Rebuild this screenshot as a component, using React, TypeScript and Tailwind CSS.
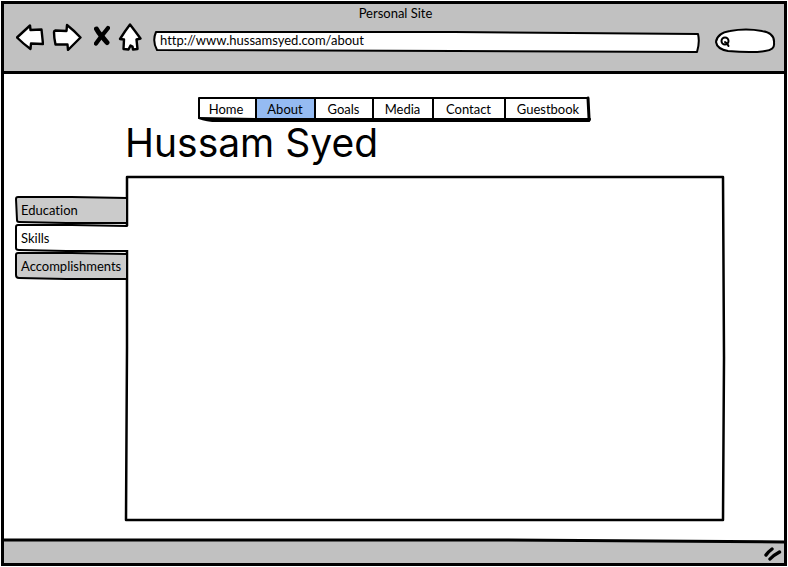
import type { ReactNode } from "react";

type OutlineProps = { box: string; d: string; fill?: string; width?: number };

/* Hand-drawn outline that stretches with the element it decorates. */
function Outline({ box, d, fill = "none", width = 2 }: OutlineProps) {
  return (
    <svg
      aria-hidden="true"
      className="pointer-events-none absolute inset-0 h-full w-full overflow-visible"
      viewBox={box}
      preserveAspectRatio="none"
    >
      <path
        d={d}
        fill={fill}
        stroke="#000"
        strokeWidth={width}
        strokeLinejoin="round"
        strokeLinecap="round"
        vectorEffect="non-scaling-stroke"
      />
    </svg>
  );
}

function ToolButton({ label, children }: { label: string; children: ReactNode }) {
  return (
    <button type="button" aria-label={label} className="block shrink-0">
      {children}
    </button>
  );
}

const links = ["Home", "About", "Goals", "Media", "Contact", "Guestbook"];

const tabs = [
  { name: "Education", d: "M110 1L55 0L2 0Q0 0 0 2L1 23Q1 25 3 25L50 26L110 26" },
  { name: "Skills", d: "M110 1L55 0L2 0Q0 0 0 2L0 23Q0 25 3 25L50 26L110 26" },
  { name: "Accomplishments", d: "M110 1L55 0L2 0Q0 0 0 2L0 22Q0 25 3 25L50 26L110 26" },
];

export default function App() {
  return (
    <div className="flex min-h-screen bg-white p-px font-['Lato',sans-serif] text-[13px] leading-4 text-black [font-variant-ligatures:none]">
      <div className="flex flex-1 flex-col border-3 border-black">
        <header className="border-b-3 border-black bg-[#c1c1c1] pr-[9px] pb-[19px] pl-3">
          <p className="h-[18px] text-center leading-[18px]">Personal Site</p>
          <div className="flex h-[30px]">
            <div className="flex h-[29px] items-center">
              <ToolButton label="Back">
                <svg width="28" height="28" viewBox="0 0 28 28" fill="#fff" stroke="#000" strokeWidth="2.4" strokeLinejoin="round">
                  <path d="M1 14.5L14 2.500L14.500 7Q20 6.500 25.500 6.500L27 21L15 20.500L14.500 26Q7 20.500 1 14.500Z" />
                </svg>
              </ToolButton>
              <div className="ml-2">
                <ToolButton label="Forward">
                  <svg width="30" height="28" viewBox="0 0 30 28" fill="#fff" stroke="#000" strokeWidth="2.4" strokeLinejoin="round">
                    <path d="M2 9Q2 8 3.500 7.500L14.500 8L15 2Q22 7.500 28.500 14.500L16 27L15.500 21.500L3.500 21.500Q2 15 2 9Z" />
                  </svg>
                </ToolButton>
              </div>
              <div className="ml-3">
                <ToolButton label="Stop">
                  <svg width="16" height="28" viewBox="0 0 16 28" fill="none" stroke="#000" strokeLinecap="round">
                    <path d="M2.500 6Q4 9 7.500 13L13 19.500" strokeWidth="5" />
                    <path d="M14 5Q11 9 7.500 13L2 20.500" strokeWidth="4.200" />
                  </svg>
                </ToolButton>
              </div>
              <div className="ml-2">
                <ToolButton label="Home page">
                  <svg width="24" height="28" viewBox="0 0 24 28" fill="#fff" stroke="#000" strokeWidth="2.400" strokeLinejoin="round">
                    <path d="M12 1.500Q17 8 22.500 15.500L18.500 16.500L19.500 26L15 26.500L14.500 23.500L12.500 22.500L10.500 26.500L5.500 26L6 16.500L2 16Q7 8 12 1.500Z" />
                  </svg>
                </ToolButton>
              </div>
            </div>
            <form className="relative ml-3 h-5 flex-1 self-end">
              <Outline box="0 0 546 20" d="M2 0L300 0L544 2Q546 10 543 20L300 19L3 18Q-2 9 2 0Z" fill="#fff" />
              <input
                aria-label="Address"
                defaultValue="http://www.hussamsyed.com/about"
                className="relative block h-4 w-full bg-transparent px-1.5 outline-none"
              />
            </form>
            <form className="relative ml-4 h-[22px] w-[59px] self-end">
              <Outline box="0 0 59 22" d="M14 1Q30 -2 46 1Q59 3 58 13Q59 20 49 21Q36 23 12 21Q1 19 0 12Q1 3 14 1Z" fill="#fff" />
              <svg aria-hidden="true" className="absolute top-1.5 left-1" width="12" height="12" viewBox="0 0 12 12" fill="none" stroke="#000" strokeWidth="2" strokeLinecap="round">
                <circle cx="5" cy="5" r="3.500" />
                <path d="M5 6L7 7.500L8.500 10" />
              </svg>
              <input type="search" aria-label="Search" className="relative block h-full w-full bg-transparent pr-2 pl-4 outline-none" />
            </form>
          </div>
        </header>

        <main className="flex flex-1 flex-col pt-6 pb-5 pl-3">
          <nav className="relative -ml-3 grid h-6 grid-cols-[57px_59px_58px_60px_72px_87px] self-center">
            {links.map((name) => (
              <a
                key={name}
                href={"#" + name.toLowerCase()}
                aria-current={name === "About" ? "page" : undefined}
                className="border-l-2 border-black pt-[3px] text-center first:border-l-0 aria-[current=page]:bg-[#95bbf2]"
              >
                {name}
              </a>
            ))}
            <Outline box="0 0 393 24" d="M1 20L1 0L390 0" />
            <Outline box="0 0 393 24" d="M390 0L391 20L391 22" width={3} />
            <Outline box="0 0 393 24" d="M1 20L60 21L392 21L391 23L200 23L20 23Q8 23 1 20Z" fill="#000" />
          </nav>

          <h1 className="h-[55px] pt-px pl-[109px] font-['Inter',sans-serif] text-[39px] leading-[40px]">Hussam Syed</h1>

          <div className="flex flex-1 pr-[60px]">
            <div role="tablist" aria-orientation="vertical" className="relative z-10 mt-5 flex w-[111px] shrink-0 flex-col gap-0.5 self-start">
              {tabs.map((tab) => (
                <button
                  key={tab.name}
                  type="button"
                  role="tab"
                  aria-selected={tab.name === "Skills"}
                  className="group relative h-[26px] text-left"
                >
                  <span className="absolute inset-y-px left-px w-[109px] bg-[#cbcbcb] group-aria-selected:w-[113px] group-aria-selected:bg-white" />
                  <Outline box="0 0 110 26" d={tab.d} />
                  <span className="relative block pl-[5px] whitespace-nowrap">{tab.name}</span>
                </button>
              ))}
            </div>
            <section role="tabpanel" aria-label="Skills" className="relative min-h-[280px] flex-1">
              <Outline box="0 0 597 343" d="M0 0L300 0L596 0L597 180L596 343L300 343L-1 343L0 170Z" width={2.5} />
            </section>
          </div>
        </main>

        <footer className="relative flex h-[23px] items-start justify-end bg-[#c1c1c1] pt-1.5 pr-0.5">
          <Outline box="0 0 780 23" d="M0 0L500 0L780 2L780 -2L0 -2Z" fill="#fff" width={0} />
          <Outline box="0 0 780 23" d="M0 0L500 0L780 2" width={3} />
          <svg aria-hidden="true" className="relative" width="18" height="16" viewBox="0 0 18 16" fill="none" stroke="#000" strokeWidth="3.400" strokeLinecap="round">
            <path d="M2 9Q4 6 8 3M6 13Q9 9.500 15.500 6" />
          </svg>
        </footer>
      </div>
    </div>
  );
}
